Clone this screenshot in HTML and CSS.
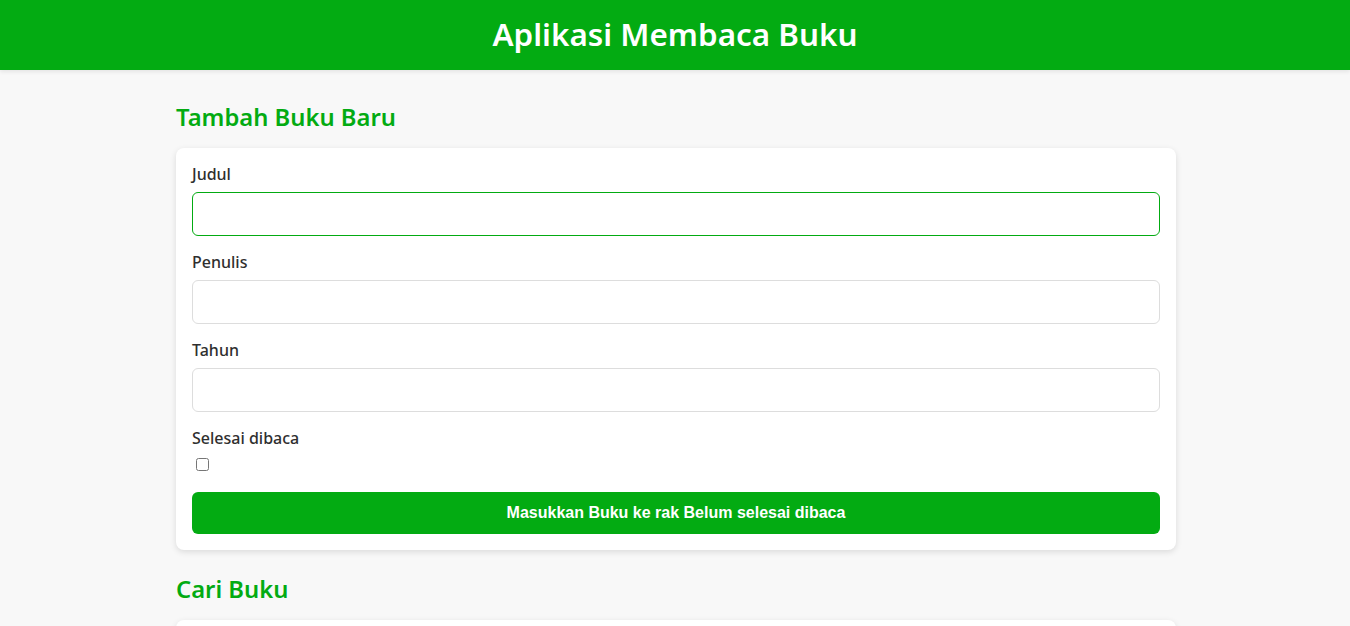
FILE: index.html
```html
<!DOCTYPE html>
<html lang="id">
<head>
<meta charset="utf-8">
<title>Aplikasi Membaca Buku</title>
<link rel="stylesheet" href="styles.css">
</head>
<body>
<header class="app-header">
  <h1 class="app-title">Aplikasi Membaca Buku</h1>
</header>
<main class="container">
  <section class="section">
    <h2 class="section-title">Tambah Buku Baru</h2>
    <form class="card" onsubmit="return false">
      <div class="field">
        <label class="field-label" for="judul">Judul</label>
        <input class="field-input field-input--active" id="judul" type="text" autofocus>
      </div>
      <div class="field">
        <label class="field-label" for="penulis">Penulis</label>
        <input class="field-input" id="penulis" type="text">
      </div>
      <div class="field">
        <label class="field-label" for="tahun">Tahun</label>
        <input class="field-input" id="tahun" type="number">
      </div>
      <div class="field field--check">
        <label class="field-label" for="selesai">Selesai dibaca</label>
        <input class="field-check" id="selesai" type="checkbox">
      </div>
      <button class="submit-btn" type="submit">Masukkan Buku ke rak Belum selesai dibaca</button>
    </form>
  </section>
  <section class="section">
    <h2 class="section-title">Cari Buku</h2>
    <form class="card" onsubmit="return false">
      <div class="field">
        <label class="field-label" for="cari">Judul</label>
        <input class="field-input" id="cari" type="text">
      </div>
    </form>
  </section>
</main>
</body>
</html>
```
FILE: styles.css
```css
* { box-sizing: border-box; }
html, body { margin: 0; padding: 0; }
body {
  background: #f8f8f8;
  font-family: "Noto Sans", "Open Sans", sans-serif;
  color: #333;
}
.app-header {
  background: #03ab12;
  height: 70px;
  display: flex;
  align-items: center;
  justify-content: center;
  box-shadow: 0 2px 4px rgba(0,0,0,0.08);
}
.app-title {
  margin: 0 0 2px;
  color: #fff;
  font-size: 31.4px;
  font-weight: 600;
  line-height: 40px;
}
.container {
  width: 1000px;
  margin: 0 auto 0 calc(50% - 499px);
  padding-top: 32px;
}
.section { margin-bottom: 24px; }
.section-title {
  margin: 0 0 16px;
  color: #03ab12;
  font-size: 23.8px;
  font-weight: 600;
  line-height: 30px;
}
.card {
  background: #fff;
  border-radius: 8px;
  padding: 16px;
  box-shadow: 0 2px 6px rgba(0,0,0,0.12);
}
.field { margin-bottom: 16px; }
.field--check { margin-bottom: 21px; }
.field-label {
  display: block;
  font-size: 16px;
  font-weight: 500;
  line-height: 20px;
  margin-bottom: 8px;
  color: #2f2f2f;
}
.field-input {
  display: block;
  width: 100%;
  height: 44px;
  border: 1px solid #ddd;
  border-radius: 6px;
  padding: 0 12px;
  font-size: 16px;
  outline: none;
  background: #fff;
}
.field-input--active,
.field-input:focus { border-color: #03ab12; }
.field-check {
  display: block;
  margin: 10px 3px 3px 4px;
  width: 13px;
  height: 13px;
}
.submit-btn {
  display: block;
  width: 100%;
  height: 42px;
  border: none;
  border-radius: 6px;
  background: #03ab12;
  color: #fff;
  font-family: "Liberation Sans", Arial, sans-serif;
  font-size: 16px;
  font-weight: 700;
  cursor: pointer;
}
```
